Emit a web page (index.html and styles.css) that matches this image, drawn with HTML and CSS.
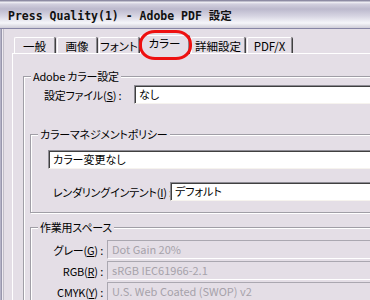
FILE: index.html
```html
<!DOCTYPE html>
<html lang="ja">
<head>
<meta charset="utf-8">
<title>Press Quality(1) - Adobe PDF 設定</title>
<link rel="stylesheet" href="styles.css">
</head>
<body>
<div class="window">
  <div class="titlebar"><span class="title">Press Quality(1) - Adobe PDF 設定</span></div>
  <div class="client">
    <div class="tabs">
      <div class="tab tab-general">一般</div>
      <div class="tab tab-image">画像</div>
      <div class="tab tab-font">フォント</div>
      <div class="tab tab-color selected">カラー<span class="highlight"></span></div>
      <div class="tab tab-advanced">詳細設定</div>
      <div class="tab tab-pdfx">PDF/X</div>
    </div>
    <div class="panel">
      <div class="group outer">
        <span class="legend">Adobe カラー設定</span>
        <div class="row file-row">
          <span class="label">設定ファイル(<u>S</u>) :</span>
          <div class="field">なし</div>
        </div>
        <div class="group policy">
          <span class="legend">カラーマネジメントポリシー</span>
          <div class="field policy-field">カラー変更なし</div>
          <div class="row intent-row">
            <span class="label">レンダリングインテント(<u>I</u>) :</span>
            <div class="field">デフォルト</div>
          </div>
        </div>
        <div class="group spaces">
          <span class="legend">作業用スペース</span>
          <div class="space-grid">
            <span class="label">グレー(<u>G</u>) :</span>
            <div class="field disabled">Dot Gain 20%</div>
            <span class="label">RGB(<u>R</u>) :</span>
            <div class="field disabled">sRGB IEC61966-2.1</div>
            <span class="label">CMYK(<u>Y</u>) :</span>
            <div class="field disabled">U.S. Web Coated (SWOP) v2</div>
          </div>
        </div>
      </div>
    </div>
  </div>
</div>
</body>
</html>
```
FILE: styles.css
```css
* { box-sizing: border-box; }
html, body { margin: 0; padding: 0; }
body {
  width: 370px;
  height: 300px;
  overflow: hidden;
  background: #e4dee6;
  font-family: "Noto Sans CJK JP", sans-serif;
  font-size: 11px;
  font-feature-settings: "palt";
  color: #000;
}
.window {
  width: 560px;
  height: 300px;
  display: flex;
  flex-direction: column;
}
.titlebar {
  height: 29px;
  flex: none;
  border-bottom: 1px solid #8886a6;
  background: linear-gradient(to bottom, #8d8ba3 0, #8d8ba3 1px, #f4f4f8 2px, #d2d0de 4px, #bcb9cd 9px, #d6d4e2 16px, #f6f6fa 23px, #e6e5ec 25px, #cfcdd8 28px);
  padding: 0 0 0 8px;
  display: flex;
  align-items: center;
}
.title {
  font-family: "DejaVu Sans Mono", "Noto Sans CJK JP", monospace;
  font-weight: bold;
  font-size: 11.5px;
  font-feature-settings: normal;
  color: #111;
  padding-top: 2px;
}
.client {
  flex: 1;
  display: flex;
  flex-direction: column;
  padding: 6px 0 0 12px;
  box-shadow: inset 1px 0 0 #b4b2c6, inset 2px 0 0 #9896ac, inset 3px 0 0 #eeeaf0, inset 4px 0 0 #c2bec8;
}
.tabs {
  display: flex;
  align-items: flex-end;
  height: 18px;
  padding-left: 2px;
  position: relative;
  z-index: 1;
}
.tab {
  flex: none;
  height: 16px;
  line-height: 16px;
  text-align: center;
  font-size: 11.5px;
  border-top: 1px solid #fff;
  border-left: 1px solid #fff;
  border-right: 1px solid #8c8a90;
  box-shadow: 1px 0 0 #404040;
  border-radius: 2px 2px 0 0;
  margin-right: 2px;
  white-space: nowrap;
}
.tab-general { width: 41px; }
.tab-image { width: 40px; }
.tab-font { width: 40px; }
.tab-color { width: 49px; }
.tab-advanced { width: 54px; }
.tab-pdfx { width: 45px; }
.tab.selected {
  height: 19px;
  margin: 0 2px -1px -1px;
  line-height: 15px;
  background: #e4dee6;
  position: relative;
}
.highlight {
  position: absolute;
  left: -2px;
  top: -6px;
  width: 53px;
  height: 30px;
  border: 3px solid #ee1010;
  border-radius: 16px / 14px;
}
.panel {
  flex: 1;
  border-top: 1px solid #fff;
  border-left: 1px solid #fff;
  padding: 22px 0 0 10px;
}
.group {
  border: 1px solid #a09ea6;
  box-shadow: inset 1px 1px 0 #fff, 1px 1px 0 #fff;
  display: flex;
  flex-direction: column;
  align-items: flex-start;
}
.legend {
  height: 14px;
  line-height: 14px;
  margin: -8px 0 0 7px;
  padding: 0 2px;
  background: #e4dee6;
  white-space: nowrap;
  letter-spacing: -0.2px;
}
.outer { width: 500px; height: 260px; }
.row { display: flex; align-items: center; }
.file-row { margin: 2px 0 0 20px; }
.file-row .label { width: 90px; }
.field {
  width: 420px;
  height: 19px;
  line-height: 17px;
  padding-left: 4px;
  background: #fff;
  border-top: 1px solid #8e8c94;
  border-left: 1px solid #8e8c94;
  border-bottom: 1px solid #f6f3ee;
  border-right: 1px solid #f6f3ee;
  box-shadow: inset 1px 1px 0 #404040;
  white-space: nowrap;
}
.label { white-space: nowrap; letter-spacing: -0.2px; }
.policy { width: 470px; margin: 30px 0 0 6px; padding-bottom: 11px; }
.policy-field { margin: 9px 0 0 17px; }
.intent-row { margin: 13px 0 0 22px; }
.intent-row .label { width: 117px; }
.spaces { width: 470px; margin: 14px 0 0 6px; }
.space-grid {
  display: grid;
  grid-template-columns: 72px 300px;
  column-gap: 4px;
  row-gap: 2px;
  align-items: center;
  margin-top: 6px;
}
.space-grid .label { text-align: right; }
.field.disabled {
  background: #e4dee6;
  color: #a6a2aa;
  border-top-color: #aaa7b0;
  border-left-color: #aaa7b0;
  border-bottom-color: #fff;
  border-right-color: #fff;
  box-shadow: none;
}
```
